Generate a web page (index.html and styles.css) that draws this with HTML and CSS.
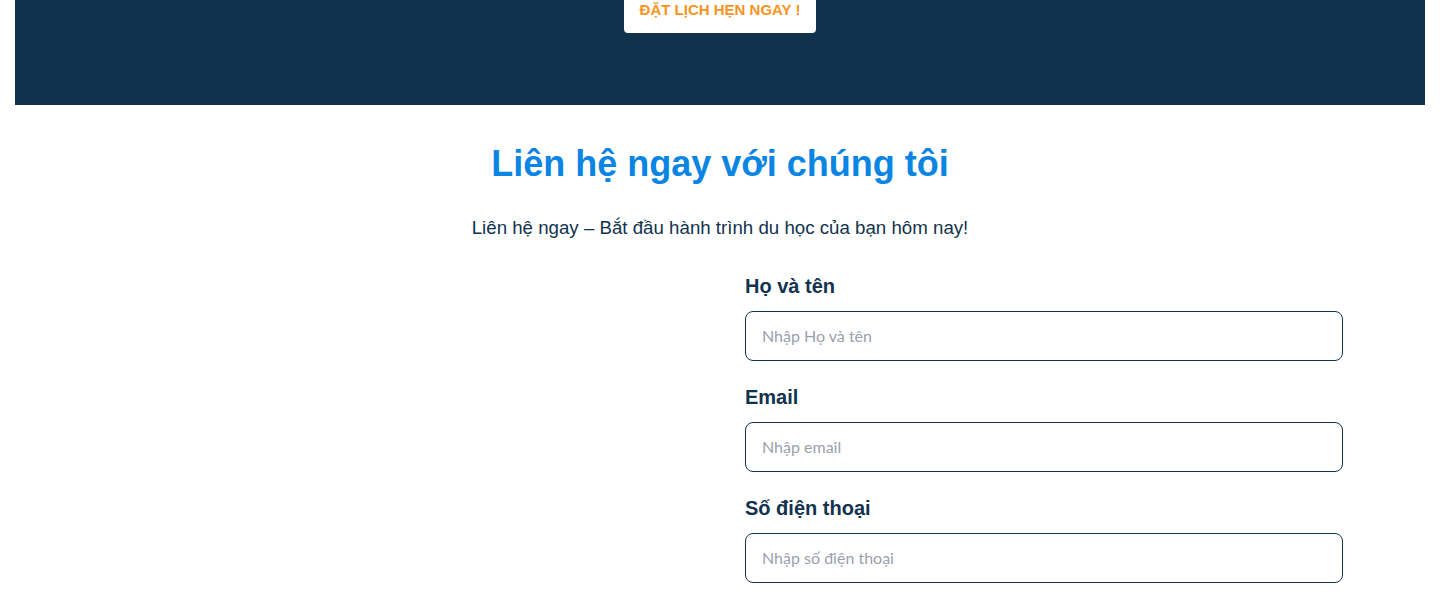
FILE: index.html
```html
<!DOCTYPE html>
<html lang="vi">
<head>
<meta charset="utf-8">
<title>Liên hệ</title>
<link rel="stylesheet" href="styles.css">
</head>
<body>
<div class="page">
  <section class="banner">
    <a class="cta" href="#">ĐẶT LỊCH HẸN NGAY !</a>
  </section>
  <section class="contact">
    <h2 class="title">Liên hệ ngay với chúng tôi</h2>
    <p class="subtitle">Liên hệ ngay – Bắt đầu hành trình du học của bạn hôm nay!</p>
    <div class="grid">
      <div class="left"></div>
      <form class="form">
        <div class="field">
          <label class="label" for="name">Họ và tên</label>
          <input class="input" id="name" type="text" placeholder="Nhập Họ và tên">
        </div>
        <div class="field">
          <label class="label" for="email">Email</label>
          <input class="input" id="email" type="email" placeholder="Nhập email">
        </div>
        <div class="field">
          <label class="label" for="phone">Số điện thoại</label>
          <input class="input" id="phone" type="tel" placeholder="Nhập số điện thoại">
        </div>
      </form>
    </div>
  </section>
</div>
</body>
</html>
```
FILE: styles.css
```css
* { box-sizing: border-box; }
html, body { margin: 0; padding: 0; background: #fff; overflow: hidden; }
body { font-family: "Liberation Sans", Arial, sans-serif; color: #12324d; }
.page { padding: 0 15px; }
.banner {
  background: #11324d;
  height: 105px;
  display: flex;
  justify-content: center;
  align-items: flex-start;
}
.cta {
  margin-top: -14px;
  background: #fff;
  color: #f7931e;
  font-weight: 700;
  font-size: 15px;
  line-height: 19px;
  padding: 14px 10px;
  border-radius: 4px;
  text-decoration: none;
  width: 192px;
  text-align: center;
  display: block;
}
.contact { text-align: center; padding-top: 38px; }
.title {
  margin: 0;
  font-size: 36px;
  line-height: 42px;
  font-weight: 700;
  color: #0b85e3;
}
.subtitle {
  margin: 32px 0 0;
  font-size: 18.7px;
  line-height: 22px;
  color: #12324d;
}
.grid {
  width: 1246px;
  margin: 36px auto 0;
  display: grid;
  grid-template-columns: 598px 598px;
  column-gap: 50px;
  text-align: left;
}
.form { display: flex; flex-direction: column; gap: 25px; }
.field { display: flex; flex-direction: column; gap: 13px; }
.label {
  font-size: 20px;
  line-height: 23px;
  font-weight: 700;
  color: #12324d;
}
.input {
  height: 50px;
  border: 1px solid #12324d;
  border-radius: 8px;
  padding: 0 16px 1px;
  font-family: Lato, "Noto Sans", sans-serif;
  font-size: 16px;
  color: #12324d;
  outline: none;
}
.input::placeholder { color: #9aa1ad; }
```
